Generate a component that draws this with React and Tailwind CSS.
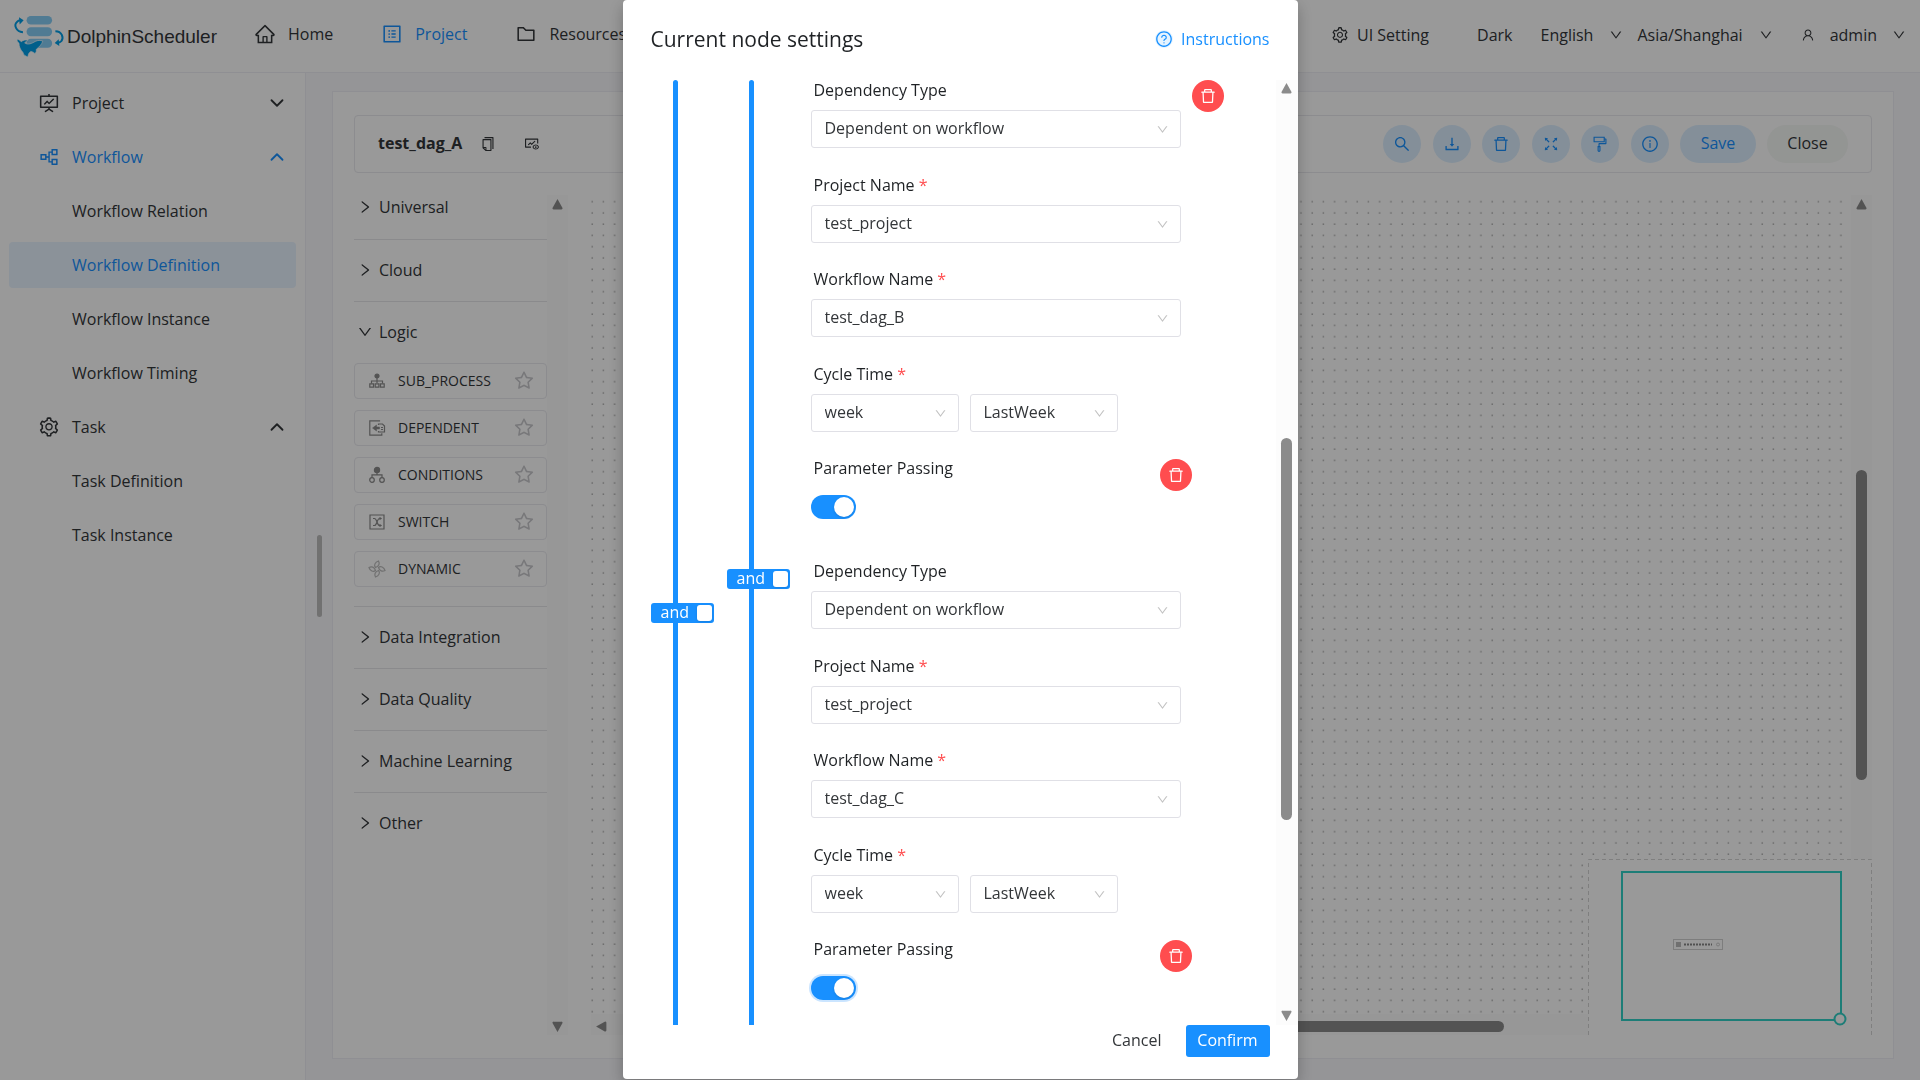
import React, { useState } from 'react';
import { ChevronDown, ChevronUp } from 'lucide-react';
import {
  AiOutlineHome,
  AiOutlineProfile,
  AiOutlineFolder,
  AiOutlineFundProjectionScreen,
  AiOutlinePartition,
  AiOutlineSetting,
  AiOutlineDown,
  AiOutlineRight,
  AiOutlineUser,
  AiOutlineCopy,
  AiOutlineFundView,
  AiOutlineSearch,
  AiOutlineDownload,
  AiOutlineDelete,
  AiOutlineFullscreen,
  AiOutlineFormatPainter,
  AiOutlineInfoCircle,
  AiOutlineStar,
  AiOutlineQuestionCircle
} from 'react-icons/ai';

const menu = [
  { label: 'Project', icon: AiOutlineFundProjectionScreen, open: false },
  {
    label: 'Workflow',
    icon: AiOutlinePartition,
    open: true,
    active: true,
    children: ['Workflow Relation', 'Workflow Definition', 'Workflow Instance', 'Workflow Timing']
  },
  { label: 'Task', icon: AiOutlineSetting, open: true, children: ['Task Definition', 'Task Instance'] }
];

const tools = [
  { label: 'Search', icon: AiOutlineSearch },
  { label: 'Download', icon: AiOutlineDownload },
  { label: 'Delete', icon: AiOutlineDelete },
  { label: 'Fullscreen', icon: AiOutlineFullscreen },
  { label: 'Format', icon: AiOutlineFormatPainter },
  { label: 'Version info', icon: AiOutlineInfoCircle }
];

function Logo() {
  return (
    <svg viewBox="0 0 160 136" className="h-[45px] w-[53px] shrink-0" aria-hidden="true">
      <g fill="#86cdf5">
        <rect x="41" y="6" width="77" height="26" rx="13" />
        <rect x="41" y="40" width="77" height="27" rx="13" />
        <rect x="41" y="75" width="77" height="27" rx="13" />
      </g>
      <g fill="none" stroke="#009fe8" strokeWidth="6">
        <path d="M30 55C8 54 2 32 12 24c3-4 7-5 12-5" />
        <path d="M128 52c20 0 26 20 18 30-4 4-7 5-12 5" />
      </g>
      <g fill="#009fe8">
        <path d="M18 10l14 9-12 13z" />
        <path d="M138 76l-12 12 14 9z" />
        <path
          d="M12 76c6 1 10 4 13 8 5-5 12-6 19-5-3 4-6 6-9 8 9 8 22 2 32-4 8-4 16-4 23-1-3 9-10 17-20 25 1 6 0 10-4 12-3-3-7-5-12-6-6 3-8 8-9 17-7-3-14-6-15-14-8-8-12-18-12-28-4-3-6-7-6-12z"
          stroke="#fff"
          strokeWidth="2"
        />
      </g>
    </svg>
  );
}

function TaskIcon({ name }) {
  const shapes = {
    SUB_PROCESS: (
      <>
        <circle cx="8" cy="3" r="2" fill="currentColor" />
        <path d="M8 4v6M2.500 10.500V8h11v2.500" />
        <path d="M.8 10.800h3.700v3.400H.8zM6.200 10.800h3.700v3.400H6.200zM11.500 10.800h3.700v3.400h-3.700z" />
      </>
    ),
    DEPENDENT: (
      <>
        <path d="M10.500 1.500V.8H.8v14.400h12v-2" />
        <path d="M9.500 5V4h4l2 2v6h-6v-1M12 7.500h2M12 9.500h2" />
        <path d="M3.500 8l4-3v2h3v2h-3v2z" fill="currentColor" strokeWidth="0.5" />
      </>
    ),
    CONDITIONS: (
      <>
        <circle cx="8" cy="3" r="2.600" fill="currentColor" />
        <path d="M8 5v2.500M3 10.500V7.800h10v2.700" />
        <circle cx="3" cy="13" r="2.300" />
        <circle cx="13" cy="13" r="2.300" />
      </>
    ),
    SWITCH: (
      <>
        <path d="M1 1h14v14H1z" />
        <path d="M4 4.500h1.500c2.500 0 2.500 7 5 7H12M4 11.500h1.500c2.500 0 2.500-7 5-7H12M10.500 3.500l1.500 1-1.500 1M10.500 10.500l1.500 1-1.500 1" />
      </>
    ),
    DYNAMIC: (
      <>
        <path d="M6.500 6.500C4.500 4.500 6 1 9.500 0c1.500 2.500.5 5.500-3 6.500z" />
        <path d="M9.500 6.500c2-2 5.500-.5 6.500 3-2.500 1.500-5.500.5-6.500-3z" />
        <path d="M9.500 9.500c2 2 .5 5.500-3 6.500-1.500-2.500-.5-5.500 3-6.500z" />
        <path d="M6.500 9.500C4.500 11.500 1 10 0 6.500 2.500 5 5.500 6 6.500 9.500z" />
      </>
    )
  };
  return (
    <svg
      viewBox="0 0 16 16"
      className={`size-4 shrink-0 overflow-visible ${name === 'DYNAMIC' ? 'text-[#bbb]' : 'text-[#8a8a8a]'}`}
      fill="none"
      stroke="currentColor"
      strokeWidth="1.2"
      aria-hidden="true"
    >
      {shapes[name]}
    </svg>
  );
}

function Arrow({ dir = 'up' }) {
  const d = {
    up: 'M6 1l4.500 8a1 1 0 0 1-1 1.500h-7a1 1 0 0 1-1-1.500z',
    down: 'M6 11l4.500-8a1 1 0 0 0-1-1.500h-7a1 1 0 0 0-1 1.500z',
    left: 'M1 6l8-4.500a1 1 0 0 1 1.500 1v7a1 1 0 0 1-1.500 1z'
  };
  return (
    <svg viewBox="0 0 12 12" className="size-[13px] shrink-0 text-[#8b8b8b]" fill="currentColor" aria-hidden="true">
      <path d={d[dir]} />
    </svg>
  );
}

function Header() {
  return (
    <header className="flex h-[73px] shrink-0 items-center justify-between border-b border-[#efeff5] bg-white pr-[14px] pl-[13px]">
      <div className="flex items-center">
        <a href="#home" className="flex w-[241px] items-center gap-[1px]">
          <Logo />
          <span className="pt-[2px] font-['Liberation_Sans',sans-serif] text-[19px]">DolphinScheduler</span>
        </a>
        <nav className="flex items-center gap-12 pb-1">
          <a href="#home" className="flex items-center gap-3">
            <AiOutlineHome className="size-[22px]" />
            Home
          </a>
          <a href="#project" className="flex items-center gap-3 text-[#1890ff]">
            <AiOutlineProfile className="size-[22px]" />
            Project
          </a>
          <a href="#resources" className="flex items-center gap-3">
            <AiOutlineFolder className="size-[22px]" />
            Resources
          </a>
        </nav>
      </div>
      <div className="flex items-center pb-[2px]">
        <button className="flex items-center gap-2">
          <AiOutlineSetting className="size-[18px]" />
          UI Setting
        </button>
        <button className="ml-12">Dark</button>
        <button className="ml-7 flex items-center gap-4">
          English
          <AiOutlineDown className="size-[14px]" />
        </button>
        <button className="ml-[14px] flex items-center gap-4">
          Asia/Shanghai
          <AiOutlineDown className="size-[14px]" />
        </button>
        <button className="ml-7 flex items-center gap-[15px]">
          <AiOutlineUser className="size-[14px]" />
          admin
          <AiOutlineDown className="size-[14px]" />
        </button>
      </div>
    </header>
  );
}

function Sidebar() {
  return (
    <aside className="w-[306px] shrink-0 border-r border-[#efeff5] bg-white px-[9px] pt-[7px]">
      <ul>
        {menu.map(item => (
          <li key={item.label}>
            <button
              className={`mb-2 flex h-[46px] w-full items-center pr-2 pl-[29px] ${item.active ? 'text-[#1890ff]' : ''}`}
            >
              <item.icon className="mr-3 size-[22px]" />
              <span className="flex-1 text-left">{item.label}</span>
              {item.open ? <ChevronUp className="size-[22px]" /> : <ChevronDown className="size-[22px]" />}
            </button>
            {item.children && (
              <ul>
                {item.children.map(child => (
                  <li key={child} className="mb-2">
                    <a
                      href="#menu"
                      className={`flex h-[46px] items-center rounded pl-[63px] ${
                        child === 'Workflow Definition' ? 'bg-[#e8f4ff] text-[#1890ff]' : ''
                      }`}
                    >
                      {child}
                    </a>
                  </li>
                ))}
              </ul>
            )}
          </li>
        ))}
      </ul>
    </aside>
  );
}

function Category({ name, tasks }) {
  return (
    <section className="border-t border-[#e6e6ea] pt-[18px] pb-[19px] first:border-t-0 first:pt-0 first:pb-5">
      <button className="flex h-6 items-center gap-[6px] pl-[3px]">
        {tasks ? <AiOutlineDown className="size-4" /> : <AiOutlineRight className="size-4" />}
        {name}
      </button>
      {tasks && (
        <ul className="mt-[19px] flex flex-col gap-[11px]">
          {tasks.map(t => (
            <li key={t} className="flex h-9 items-center rounded border border-[#e9e9ee] pr-[11px] pl-[14px]">
              <TaskIcon name={t} />
              <span className="ml-[13px] flex-1 text-sm">{t}</span>
              <AiOutlineStar className="size-[22px] text-[#c8c8cc]" />
            </li>
          ))}
        </ul>
      )}
    </section>
  );
}

function Minimap() {
  return (
    <svg viewBox="0 0 284 176" className="absolute right-0 bottom-0 h-44 w-[284px]" aria-label="Minimap">
      <rect width="284" height="176" fill="#fff" />
      <path d="M.5 176V.5h283V176" fill="none" stroke="#d4d4d4" strokeDasharray="4 3" />
      <rect x="85.500" y="80.500" width="49" height="10" fill="none" stroke="#d0d0d0" />
      <rect x="88" y="83" width="5" height="5" fill="#bbb" />
      <path d="M96 85.500h28" stroke="#888" strokeWidth="2" strokeDasharray="2 1" />
      <circle cx="130" cy="85.500" r="1.500" fill="none" stroke="#ccc" />
      <rect x="34" y="13" width="219" height="148" fill="none" stroke="#31d0c6" strokeWidth="2" />
      <circle cx="252" cy="160" r="5.500" fill="#fff" stroke="#31d0c6" strokeWidth="2" />
    </svg>
  );
}

function Canvas() {
  return (
    <div className="relative flex min-w-0 flex-1 flex-col">
      <div className="flex min-h-0 flex-1">
        <svg className="h-full min-w-0 flex-1" aria-hidden="true">
          <defs>
            <pattern id="dots" width="11.25" height="11.25" patternUnits="userSpaceOnUse">
              <rect x="0.500" y="6" width="1.400" height="1.400" fill="#a8a8a8" />
            </pattern>
          </defs>
          <rect width="100%" height="100%" fill="url(#dots)" />
        </svg>
        <div className="flex w-[21px] flex-col items-center bg-[#fcfcfc] pt-[3px]">
          <Arrow />
          <div className="mt-[259px] h-[310px] w-[11px] rounded-md bg-[#8b8b8b]" />
        </div>
      </div>
      <div className="flex h-[21px] items-center bg-[#fcfcfc] pt-[3px] pl-1">
        <Arrow dir="left" />
        <div className="ml-[340px] h-[11px] w-[556px] rounded-md bg-[#8b8b8b]" />
      </div>
      <Minimap />
    </div>
  );
}

function Workspace() {
  return (
    <main className="flex min-w-0 flex-1 bg-[#f8f8fc] pt-[18px] pr-[26px] pb-[21px]">
      <div className="flex w-[26px] shrink-0 flex-col items-center">
        <div className="mt-[444px] h-[82px] w-[5px] rounded-sm bg-[#bcbcbc]" />
      </div>
      <div className="flex min-w-0 flex-1 flex-col border border-[#efeff5] bg-white px-[21px] pt-[23px] pb-[23px]">
        <div className="flex h-[58px] shrink-0 items-center rounded border border-[#e9e9ee] pr-[23px] pl-[23px]">
          <h1 className="pb-[2px] text-[16px] font-bold">test_dag_A</h1>
          <button aria-label="Copy name" className="ml-[18px]">
            <AiOutlineCopy className="size-4" />
          </button>
          <button aria-label="Variables" className="ml-7">
            <AiOutlineFundView className="size-4" />
          </button>
          <div className="ml-auto flex w-[286px] justify-between text-[#1890ff]">
            {tools.map(t => (
              <button
                key={t.label}
                aria-label={t.label}
                className="flex size-[38px] items-center justify-center rounded-full bg-[#dcefff]"
              >
                <t.icon className="size-[18px]" />
              </button>
            ))}
          </div>
          <button className="ml-[11px] h-[38px] w-[76px] rounded-full bg-[#dcefff] pb-[2px] text-[#1890ff]">Save</button>
          <button className="ml-[11px] h-[38px] w-[81px] rounded-full bg-[#f6f8f6] pb-[2px]">Close</button>
        </div>
        <div className="mt-[22px] flex min-h-0 flex-1">
          <div className="w-[193px] min-w-0 shrink-0 overflow-hidden">
            <Category name="Universal" />
            <Category name="Cloud" />
            <Category name="Logic" tasks={['SUB_PROCESS', 'DEPENDENT', 'CONDITIONS', 'SWITCH', 'DYNAMIC']} />
            <Category name="Data Integration" />
            <Category name="Data Quality" />
            <Category name="Machine Learning" />
            <Category name="Other" />
          </div>
          <div className="mr-[23px] flex w-[21px] shrink-0 flex-col items-center justify-between bg-[#fcfcfc] pt-[3px] pb-[2px]">
            <Arrow />
            <Arrow dir="down" />
          </div>
          <Canvas />
        </div>
      </div>
    </main>
  );
}

function Field({ label, required, children }) {
  return (
    <fieldset>
      <legend className="mb-2 h-6 pl-[3px] leading-6 text-[#1f2225]">
        {label}
        {required && <span className="text-[#ff4d4f]"> *</span>}
      </legend>
      <div className="flex gap-[11px]">{children}</div>
    </fieldset>
  );
}

function Select({ label, value, short }) {
  return (
    <div className={`relative ${short ? 'w-[148px]' : 'w-[370px]'}`}>
      <select
        aria-label={label}
        defaultValue={value}
        className="h-[38px] w-full appearance-none rounded-[3px] border border-[#e0e0e6] bg-white pr-8 pb-[2px] pl-[13px] text-[#333639] outline-none"
      >
        <option>{value}</option>
      </select>
      <AiOutlineDown className="pointer-events-none absolute top-[13px] right-3 size-[13px] text-[#c2c2c2]" />
    </div>
  );
}

function DeleteButton() {
  return (
    <button
      aria-label="Delete"
      className="flex size-8 shrink-0 items-center justify-center rounded-full bg-[#ff4d4f] text-white"
    >
      <AiOutlineDelete className="size-[18px]" />
    </button>
  );
}

function Dependency({ workflow, focused }) {
  const [passing, setPassing] = useState(true);
  return (
    <div className="flex h-[481px] flex-col justify-between pb-10">
      <Field label="Dependency Type">
        <Select label="Dependency Type" value="Dependent on workflow" />
      </Field>
      <Field label="Project Name" required>
        <Select label="Project Name" value="test_project" />
      </Field>
      <Field label="Workflow Name" required>
        <Select label="Workflow Name" value={workflow} />
      </Field>
      <Field label="Cycle Time" required>
        <Select label="Cycle" value="week" short />
        <Select label="Time" value="LastWeek" short />
      </Field>
      <div className="flex w-[381px] items-start justify-between">
        <label className="flex flex-col gap-[15px] leading-6 text-[#1f2225]">
          <span className="pl-[3px]">Parameter Passing</span>
          <input
            type="checkbox"
            checked={passing}
            onChange={e => setPassing(e.target.checked)}
            className={`flex h-6 w-[45px] appearance-none items-center justify-start rounded-full bg-[#dbdbdb] px-[2px] before:size-5 before:rounded-full before:bg-white before:shadow before:content-[''] checked:justify-end checked:bg-[#1890ff] ${
              focused ? 'shadow-[0_0_0_2px_#cbe5ff]' : ''
            }`}
          />
        </label>
        <div className="pt-[3px]">
          <DeleteButton />
        </div>
      </div>
    </div>
  );
}

// vertical bar joining a group of dependencies, with its and/or toggle in the middle
function Relation({ tall }) {
  const [and, setAnd] = useState(true);
  return (
    <div className={`relative flex w-16 shrink-0 items-center ${tall ? 'h-[1066px]' : 'h-[998px]'}`}>
      <div className="absolute inset-y-0 left-[22px] w-[5px] rounded bg-[#1890ff]" />
      <label className="relative flex h-5 w-[63px] items-center justify-between rounded-[3px] bg-[#1890ff] pr-[2px] pl-[10px] text-white">
        <span className="pb-[2px] leading-5">{and ? 'and' : 'or'}</span>
        <input
          type="checkbox"
          checked={and}
          onChange={e => setAnd(e.target.checked)}
          className="h-4 w-[15px] appearance-none rounded-[3px] bg-white shadow"
        />
      </label>
    </div>
  );
}

function NodeModal() {
  return (
    <div className="fixed inset-0 flex justify-center bg-black/40 pb-px">
      <div
        role="dialog"
        aria-label="Current node settings"
        className="flex w-[675px] flex-col rounded bg-white shadow-[0_6px_16px_rgba(0,0,0,0.25)]"
      >
        <div className="flex h-20 shrink-0 items-center justify-between px-7">
          <h2 className="text-[21px] text-[#1f2225]">Current node settings</h2>
          <a href="#instructions" className="flex items-center gap-2 pb-[3px] text-[#1890ff]">
            <AiOutlineQuestionCircle className="size-[18px] rounded-full bg-[#e6f4ff]" />
            Instructions
          </a>
        </div>
        <div className="flex min-h-0 flex-1 justify-between overflow-hidden pl-7">
          <div className="flex items-start gap-3">
            <Relation tall />
            <Relation />
            <div className="-mt-[2px] ml-2 w-[370px]">
              <Dependency workflow="test_dag_B" />
              <Dependency workflow="test_dag_C" focused />
            </div>
            <div className="-ml-px">
              <DeleteButton />
            </div>
          </div>
          <div className="flex w-[22px] shrink-0 flex-col items-center bg-[#fcfcfc] pt-[2px] pb-[3px]">
            <Arrow />
            <div className="mt-[343px] h-[382px] w-[11px] rounded-md bg-[#8b8b8b]" />
            <div className="mt-auto">
              <Arrow dir="down" />
            </div>
          </div>
        </div>
        <div className="flex h-[54px] shrink-0 items-start justify-end gap-6 pr-7">
          <button className="h-8 pb-[2px] text-[#333639]">Cancel</button>
          <button className="h-8 w-[84px] rounded-[3px] bg-[#1890ff] pb-[2px] text-white">Confirm</button>
        </div>
      </div>
    </div>
  );
}

export default function App() {
  return (
    <div className="flex h-screen flex-col overflow-hidden font-['Open_Sans','Noto_Sans',sans-serif] text-[16px] text-[#333639]">
      <Header />
      <div className="flex min-h-0 flex-1">
        <Sidebar />
        <Workspace />
      </div>
      <NodeModal />
    </div>
  );
}
